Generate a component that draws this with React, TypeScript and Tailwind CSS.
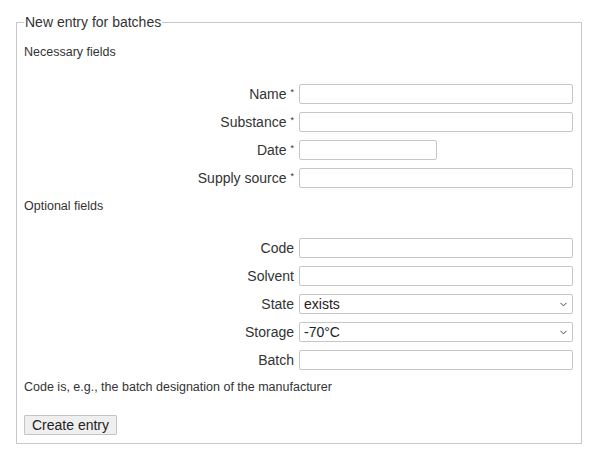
import { ChevronDown } from "lucide-react";

type Field = {
  label: string;
  required?: boolean;
  kind?: "text" | "short" | "select";
  value?: string;
};

const necessary: Field[] = [
  { label: "Name", required: true },
  { label: "Substance", required: true },
  { label: "Date", required: true, kind: "short" },
  { label: "Supply source", required: true },
];

const optional: Field[] = [
  { label: "Code" },
  { label: "Solvent" },
  { label: "State", kind: "select", value: "exists" },
  { label: "Storage", kind: "select", value: "-70°C" },
  { label: "Batch" },
];

const FieldRow = ({ field }: { field: Field }) => {
  return (
    <div className="flex items-center h-5">
      <label className="w-[270px] text-right text-[14px] leading-5 text-[#333]">
        {field.label}
        {field.required && (
          <sup className="ml-[4px] text-[9px] leading-none relative -top-[4px]">*</sup>
        )}
      </label>
      <div className="ml-[5px]">
        {field.kind === "select" ? (
          <div className="relative w-[274px] h-5 border border-[#c6c6c6] rounded-[2px] bg-white flex items-center pl-[4px] text-[14px] text-[#222]">
            {field.value}
            <ChevronDown
              className="absolute right-[3px] top-[4px] w-[11px] h-[11px] text-[#333]"
              strokeWidth={2}
            />
          </div>
        ) : (
          <input
            type="text"
            className={
              "h-5 border border-[#c6c6c6] rounded-[2px] bg-white outline-none " +
              (field.kind === "short" ? "w-[138px]" : "w-[274px]")
            }
          />
        )}
      </div>
    </div>
  );
};

const App = () => {
  return (
    <div className="w-[595px] h-[458px] bg-white pt-[13px] font-['Liberation_Sans',Arial,sans-serif] text-[#333]">
      <fieldset className="ml-4 w-[566px] border border-[#c8c8c8] pl-[7px] pr-1 pb-[6px]">
        <legend className="px-px text-[14px] leading-[18px] text-[#333]">
          New entry for batches
        </legend>
        <p className="mt-[13px] text-[12.5px] leading-4">Necessary fields</p>
        <div className="mt-[24px] flex flex-col gap-2">
          {necessary.map((f) => (
            <FieldRow key={f.label} field={f} />
          ))}
        </div>
        <p className="mt-[10px] text-[12.5px] leading-4">Optional fields</p>
        <div className="mt-[24px] flex flex-col gap-2">
          {optional.map((f) => (
            <FieldRow key={f.label} field={f} />
          ))}
        </div>
        <p className="mt-[9px] text-[12.5px] leading-4">
          Code is, e.g., the batch designation of the manufacturer
        </p>
        <button className="mt-[20px] h-5 px-[7px] border border-[#c4c4c4] bg-[#efefef] rounded-[1px] text-[14px] leading-[18px] text-[#222]">
          Create entry
        </button>
      </fieldset>
    </div>
  );
};

export default App;
